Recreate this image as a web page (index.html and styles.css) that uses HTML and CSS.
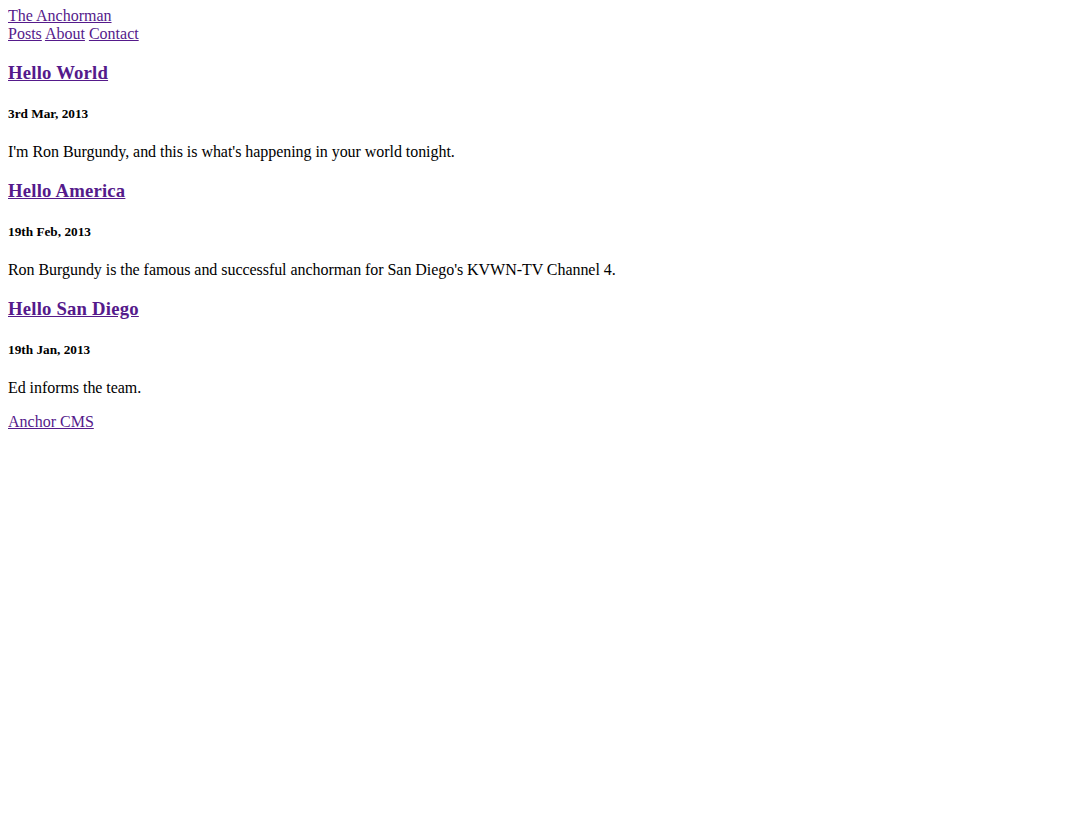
FILE: index.html
```html
<!DOCTYPE html>
<html>
<head>
<meta charset="utf-8">
<title>The Anchorman</title>
<link rel="stylesheet" href="styles.css">
</head>
<body>
<header class="site-header">
  <a class="site-title" href="#">The Anchorman</a>
  <nav class="site-nav">
    <a href="#">Posts</a>
    <a href="#">About</a>
    <a href="#">Contact</a>
  </nav>
</header>
<section class="posts">
  <article class="post">
    <h3 class="post-title"><a href="#">Hello World</a></h3>
    <h5 class="post-date">3rd Mar, 2013</h5>
    <p class="post-excerpt">I'm Ron Burgundy, and this is what's happening in your world tonight.</p>
  </article>
  <article class="post">
    <h3 class="post-title"><a href="#">Hello America</a></h3>
    <h5 class="post-date">19th Feb, 2013</h5>
    <p class="post-excerpt">Ron Burgundy is the famous and successful anchorman for San Diego's KVWN-TV Channel 4.</p>
  </article>
  <article class="post">
    <h3 class="post-title"><a href="#">Hello San Diego</a></h3>
    <h5 class="post-date">19th Jan, 2013</h5>
    <p class="post-excerpt">Ed informs the team.</p>
  </article>
</section>
<footer class="site-footer">
  <p class="credit"><a href="#">Anchor CMS</a></p>
</footer>
</body>
</html>
```
FILE: styles.css
```css
html, body {
  font-family: "Liberation Serif", "Times New Roman", serif;
  font-size: 16px;
  line-height: 18px;
  color: #000;
  background: #fff;
}
body {
  margin: 7px 8px 8px;
}
a {
  color: #551a8b;
  text-decoration: underline;
}
.site-title,
.site-nav {
  display: block;
}
.post-title {
  font-size: 1.17em;
  line-height: 22px;
  letter-spacing: 0.2px;
  margin: 1em 0;
  font-weight: bold;
}
.post-date {
  font-size: 0.83em;
  line-height: 15px;
  margin: 1.67em 0;
  font-weight: bold;
}
.post-excerpt {
  letter-spacing: -0.05px;
}
.post-excerpt,
.credit {
  margin: 1em 0;
}
```
